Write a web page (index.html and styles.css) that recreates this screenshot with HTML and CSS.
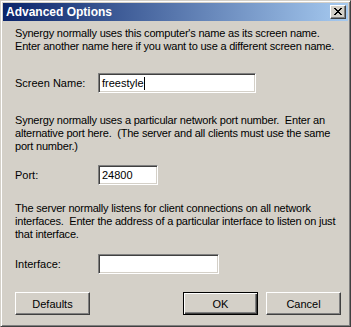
FILE: index.html
```html
<!DOCTYPE html>
<html lang="en">
<head>
  <meta charset="UTF-8" />
  <title>Advanced Options</title>
  <link rel="stylesheet" href="styles.css">
</head>
<body>
  <div class="window">
    <div class="titlebar">
      <span class="title">Advanced Options</span>
      <span class="close">
        <svg width="8" height="7" viewBox="0 0 8 7">
          <path d="M0 0h2v1h-2zM6 0h2v1h-2zM1 1h2v1h-2zM5 1h2v1h-2zM2 2h4v1h-4zM3 3h2v1h-2zM2 4h4v1h-4zM1 5h2v1h-2zM5 5h2v1h-2zM0 6h2v1h-2zM6 6h2v1h-2z" fill="#000"/>
        </svg>
      </span>
    </div>

    <div class="content">
      <p class="para first">Synergy normally uses this computer's name as its screen name.<br>Enter another name here if you want to use a different screen name.</p>
      <div class="row row-name">
        <label>Screen Name:</label>
        <div class="field name-field">freestyle<span class="caret"></span></div>
      </div>

      <p class="para para-port">Synergy normally uses a particular network port number.&nbsp; Enter an<br>alternative port here.&nbsp; (The server and all clients must use the same<br>port number.)</p>
      <div class="row row-port">
        <label>Port:</label>
        <div class="field port-field">24800</div>
      </div>

      <p class="para para-iface">The server normally listens for client connections on all network<br>interfaces.&nbsp; Enter the address of a particular interface to listen on just<br>that interface.</p>
      <div class="row">
        <label>Interface:</label>
        <div class="field iface-field"></div>
      </div>

      <div class="buttons">
        <button class="btn">Defaults</button>
        <span class="spacer"></span>
        <button class="btn default">OK</button>
        <button class="btn">Cancel</button>
      </div>
    </div>
  </div>
</body>
</html>
```

FILE: styles.css
```css
body {
  margin: 0;
  background: #d4d0c8;
  font-family: "Liberation Sans", Arial, sans-serif;
  font-size: 11px;
  color: #000;
}
.window {
  width: 351px;
  height: 327px;
  box-sizing: border-box;
  background: #d4d0c8;
  border: 1px solid;
  border-color: #d4d0c8 #404040 #404040 #d4d0c8;
  box-shadow: inset 1px 1px #fff, inset -1px -1px #808080;
  padding: 2px;
}
.titlebar {
  height: 18px;
  background: linear-gradient(to right, #0a246a, #a6caf0);
  display: flex;
  align-items: center;
  padding: 0 2px 0 3px;
}
.title {
  color: #fff;
  font-weight: bold;
  font-size: 12px;
  flex: 1;
}
.close {
  width: 16px;
  height: 14px;
  box-sizing: border-box;
  background: #d4d0c8;
  border: 1px solid;
  border-color: #fff #404040 #404040 #fff;
  box-shadow: inset -1px -1px #808080;
  display: flex;
  align-items: center;
  justify-content: center;
  padding: 0 1px 1px 0;
}
.content {
  padding: 6px 7px 0 12px;
}
.para {
  margin: 0;
  line-height: 13px;
  white-space: nowrap;
  letter-spacing: -0.2px;
}
.para-port {
  margin-top: 21px;
}
.para-iface {
  margin-top: 17px;
}
.row {
  display: flex;
  align-items: center;
  margin-top: 13px;
}
.row-name {
  margin-top: 20px;
}
.row-port {
  margin-top: 12px;
}
.row label {
  width: 83px;
}
.field {
  height: 20px;
  box-sizing: border-box;
  background: #fff;
  border: 1px solid;
  border-color: #808080 #fff #fff #808080;
  box-shadow: inset 1px 1px #404040, inset -1px -1px #d4d0c8;
  padding: 3px 3px 0 3px;
  line-height: 13px;
}
.name-field { width: 158px; }
.port-field { width: 60px; }
.iface-field { width: 121px; }
.caret {
  display: inline-block;
  width: 1px;
  height: 13px;
  background: #000;
  vertical-align: top;
}
.buttons {
  display: flex;
  margin-top: 18px;
  gap: 8px;
}
.spacer {
  flex: 1;
}
.btn {
  width: 75px;
  height: 23px;
  box-sizing: border-box;
  background: #d4d0c8;
  font-family: "Liberation Sans", Arial, sans-serif;
  font-size: 11px;
  color: #000;
  border: 1px solid;
  border-color: #fff #404040 #404040 #fff;
  box-shadow: inset -1px -1px #808080;
  padding: 0;
}
.btn.default {
  border: 1px solid #000;
  box-shadow: inset 1px 1px #fff, inset -1px -1px #404040, inset -2px -2px #808080;
}
```
